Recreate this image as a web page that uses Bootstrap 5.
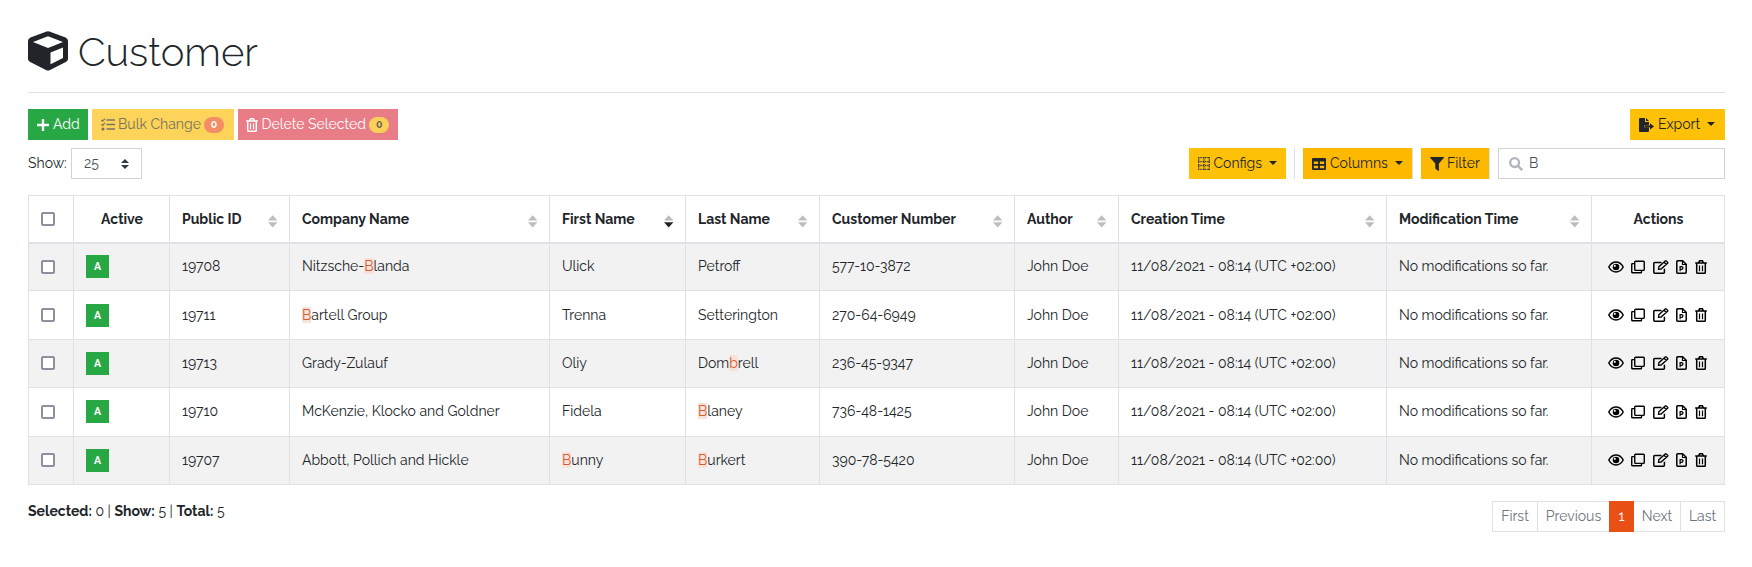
<!DOCTYPE html>
<html lang="en">
<head>
<meta charset="utf-8">
<meta name="viewport" content="width=device-width, initial-scale=1">
<title>Customer</title>
<link href="https://cdn.jsdelivr.net/npm/bootstrap@5.3.0/dist/css/bootstrap.min.css" rel="stylesheet">
<style>
  body { font: 14px/21px Raleway, Lato, sans-serif; color: #212529; background: #fff; overflow: hidden; }
  .page { padding: 27px 27px 0 28px; }
  svg { display: block; flex: none; }
  h1 { font-size: 40px; font-weight: 300; line-height: 48px; color: #212529; gap: 10px; height: 50px; }
  .rule { height: 1px; background: #dfe1e3; margin: 15px 0 16px; }
  .btn { --bs-btn-font-size: 14px; --bs-btn-border-radius: 0; --bs-btn-border-width: 0; height: 31px; padding: 0 9px; display: flex; align-items: center; gap: 4px; white-space: nowrap; line-height: 21px; }
  .btn-success { --bs-btn-bg: #28a745; }
  .btn-amber, .btn-amber:hover { background: #ffc107; color: #212529; }
  .deep, .deep:hover { background: #fdb900; }
  .btn-bulk, .btn-bulk:disabled { background: #fdd459; color: #77735f; opacity: 1; border: 0; }
  .btn-del, .btn-del:disabled { background: #e87c87; color: #fff; opacity: 1; border: 0; }
  .count { width: 20px; height: 16px; border-radius: 8px; font-size: 10.5px; font-weight: 700; line-height: 15px; text-align: center; }
  .caret { border: 4px solid transparent; border-top-color: #212529; border-bottom: 0; margin: 0 0 1px 3px; }
  .box { border: 1px solid #ced4da; height: 31px; background: #fff; display: flex; align-items: center; color: #495057; }
  .vline { width: 1px; height: 31px; background: #dee2e6; }
  .grid { table-layout: fixed; width: 1697px; border-collapse: collapse; margin: 16px 0 0; }
  .grid th, .grid td { border: 1px solid #dee2e6; padding: 0 12px; white-space: nowrap; vertical-align: middle; }
  .grid thead tr { height: 47px; }
  .grid thead th { border-bottom: 2px solid #dee2e6; font-weight: 700; padding: 1px 11px 0 12px; }
  .grid tbody tr { height: 48.4px; }
  .grid tbody tr:nth-child(odd) { background: #f2f2f2; }
  .tick { width: 14px; height: 14px; border: 2px solid #8f8f9d; border-radius: 2px; background: #fff; }
  .state { width: 23px; height: 23px; background: #28a745; color: #fff; font-size: 10.5px; font-weight: 700; line-height: 23px; text-align: center; }
  .hit { background: #f8e3dc; color: #d95b2c; }
  .tools { gap: 7.5px; color: #000; margin-left: 3.5px; }
  .page-link { --bs-pagination-font-size: 14px; --bs-pagination-color: #6c757d; --bs-pagination-border-radius: 0; height: 31px; padding: 4px 0; text-align: center; line-height: 21px; border-color: #dee2e6; }
  .active > .page-link { background: #e95015; border-color: #e95015; color: #fff; }
</style>
</head>
<body>
<svg width="0" height="0" class="position-absolute">
  <defs>
    <g id="trash" fill="none" stroke="currentColor" stroke-width="1.5"><path d="M.2 3h11.6M3.7 2.6 4.6.8h2.8l.9 1.8M1.7 3.2v9.2q0 .9.9.9h6.8q.9 0 .9-.9V3.2"/><path d="M4.5 5.4v5.8M7.5 5.4v5.8" stroke-width="1.2"/></g>
    <g id="sort"><path d="M0 5.5 4.7.2 9.4 5.5z"/><path d="M0 7.3h9.4L4.7 12.6z"/></g>
  </defs>
</svg>
<main class="page">
  <h1 class="d-flex align-items-center m-0">
    <svg width="40" height="40" viewBox="0 0 512 512" fill="#212529" style="margin-top:-2px"><path d="M239 6 31 84Q0 97 0 129v226q0 28 28 42l208 104q20 10 40 0l208-104q28-14 28-42V129q0-32-31-45L273 6q-17-6-34 0zm17 62 192 72v1l-192 78-192-78v-1zm32 357V275l160-65v134z"/></svg>
    <span>Customer</span>
  </h1>
  <div class="rule"></div>

  <div class="d-flex" style="gap:4px">
    <button class="btn btn-success" style="width:60px"><svg width="12" height="12" viewBox="0 0 12 12"><path d="M6 0v12M0 6h12" stroke="#fff" stroke-width="2.4"/></svg>Add</button>
    <button class="btn btn-bulk" style="width:142px;gap:3px" disabled>
      <svg width="14" height="13" viewBox="0 0 14 13" fill="none" stroke="#77735f" stroke-width="1.6"><path d="M5.5 2H14M5.5 6.5H14M5.5 11H14"/><path d="m.4 2 1.1 1.2L4 .6M.4 6.3l1.1 1.2L4 4.9" stroke-width="1.2"/><circle cx="2" cy="11" r=".7"/></svg>
      Bulk Change<span class="count text-white" style="background:#f48c68">0</span></button>
    <button class="btn btn-del" style="width:160px;gap:3.500px;padding-left:8px" disabled><svg width="12" height="14" viewBox="0 0 12 14"><use href="#trash"/></svg>Delete Selected<span class="count" style="background:#fbcf58;color:#66645c">0</span></button>
    <button class="btn btn-amber ms-auto" style="width:95px"><svg width="15" height="14" viewBox="0 0 15 14" fill="#212529"><path d="M1 0h5v4h4v3.600H5v1.600h5V13q0 1-1 1H1q-1 0-1-1V1q0-1 1-1zM7 0l3 3H7z"/><path d="M5.500 7.600H11V5.300l4 3.100-4 3.100V9.200H5.500z"/></svg>Export<i class="caret"></i></button>
  </div>

  <div class="d-flex align-items-center mt-2">
    <span style="width:43px">Show:</span>
    <div class="box justify-content-between" style="width:71px;padding:0 12px">25<svg width="8" height="10" viewBox="0 0 8 10" fill="#343a40"><path d="M0 4 4 0l4 4zM0 6h8l-4 4z"/></svg></div>
    <button class="btn btn-amber ms-auto"><svg width="12" height="13" viewBox="0 0 12 13" fill="none" stroke="#343a40" stroke-width="1.3" stroke-dasharray="1.4 .9"><path d="M0 .7h12M0 4.6h12M0 8.500h12M0 12.300h12M.7 0v13M6 0v13M11.300 0v13"/></svg>Configs<i class="caret"></i></button>
    <i class="vline ms-2"></i>
    <button class="btn btn-amber deep ms-2" style="width:109px"><svg width="14" height="12" viewBox="0 0 14 12" fill="#212529"><path fill-rule="evenodd" d="M1.3 0h11.4Q14 0 14 1.3v9.4q0 1.3-1.3 1.3H1.3Q0 12 0 10.7V1.3Q0 0 1.3 0zm.5 3.5v2.4h4.3V3.5zm6.1 0v2.4h4.3V3.5zM1.8 7.7v2.5h4.3V7.7zm6.1 0v2.5h4.3V7.7z"/></svg>Columns<i class="caret"></i></button>
    <i class="vline me-2"></i>
    <button class="btn btn-amber deep" style="width:68px;gap:3px"><svg width="14" height="14" viewBox="0 0 14 14" fill="#212529"><path d="M.7 0h12.6q1.2 0 .4 1L8.9 6.4v7q0 1-.9.3l-2.2-1.8q-.5-.4-.5-1V6.4L.3 1Q-.4 0 .7 0z"/></svg>Filter</button>
    <i class="vline me-2"></i>
    <div class="box" style="width:227px;padding-left:10px;gap:6px"><svg width="14" height="14" viewBox="0 0 14 14" fill="none" stroke="#adb5bd" stroke-width="2.3"><circle cx="5.6" cy="5.6" r="4.4"/><path d="m8.9 8.9 4.3 4.3"/></svg>B</div>
  </div>

  <table class="grid">
    <colgroup id="cols"></colgroup>
    <thead><tr id="head"></tr></thead>
    <tbody id="rows"></tbody>
  </table>

  <div class="d-flex justify-content-between mt-3">
    <div><b>Selected:</b> 0 | <b>Show:</b> 5 | <b>Total:</b> 5</div>
    <ul class="pagination m-0">
      <li class="page-item"><a class="page-link" style="width:46px" href="#">First</a></li>
      <li class="page-item"><a class="page-link" style="width:73px" href="#">Previous</a></li>
      <li class="page-item active"><a class="page-link" style="width:25px" href="#">1</a></li>
      <li class="page-item"><a class="page-link" style="width:48px" href="#">Next</a></li>
      <li class="page-item"><a class="page-link" style="width:45px" href="#">Last</a></li>
    </ul>
  </div>
</main>
<script src="https://cdn.jsdelivr.net/npm/bootstrap@5.3.0/dist/js/bootstrap.bundle.min.js"></script>
<script>
  const tick = '<div class="tick"></div>';
  const tools = `<div class="d-flex align-items-center tools">
    <svg width="16" height="12" viewBox="0 0 16 12"><path d="M.8 6Q3.500 1 8 1t7.200 5Q12.500 11 8 11T.8 6z" fill="none" stroke="#000" stroke-width="1.500"/><circle cx="8" cy="6" r="3.300"/><circle cx="6.800" cy="4.800" r="1.100" fill="#f2f2f2"/></svg>
    <svg width="14" height="14" viewBox="0 0 15 14" fill="none" stroke="#000" stroke-width="1.500"><rect x="4" y=".8" width="10.200" height="9.800" rx=".9"/><path d="M3.800 3.400H1.700q-.9 0-.9.900v8q0 .9.900.9h8.700q.9 0 .9-.900v-1.500"/></svg>
    <svg width="16" height="14" viewBox="0 0 16 14" fill="none" stroke="#000" stroke-width="1.500"><path d="M8.500 2.500H1.700q-.9 0-.9.900v8.900q0 .9.900.9h8.800q.9 0 .9-.900V8.800"/><path d="m5.500 9.200.4-2.500L12.200.9q.5-.4 1 0l1.400 1.300q.5.500 0 1L8 9z M11 2.200l2.400 2.300" stroke-width="1.300"/></svg>
    <svg width="11" height="14" viewBox="0 0 11 14" fill="none" stroke="#000" stroke-width="1.500"><path d="M1.600.8h5l3.600 3.500v8q0 .9-.9.900H1.700q-.9 0-.9-.900V1.700q0-.9.800-.9z"/><path d="M6.500.8v3.700h3.700M4.100 11.200V6.700h1.500q1.300 0 1.300 1.300T5.600 9.300H4.300" stroke-width="1.200"/></svg>
    <svg width="12" height="14" viewBox="0 0 12 14"><use href="#trash"/></svg></div>`;
  const columns = [['', 45], ['Active', 96], ['Public ID', 120], ['Company Name', 260], ['First Name', 136], ['Last Name', 134],
    ['Customer Number', 195], ['Author', 104], ['Creation Time', 268], ['Modification Time', 205], ['Actions', 133]];
  const people = [
    ['19708', 'Nitzsche-[B]landa', 'Ulick', 'Petroff', '577-10-3872'],
    ['19711', '[B]artell Group', 'Trenna', 'Setterington', '270-64-6949'],
    ['19713', 'Grady-Zulauf', 'Oliy', 'Dom[b]rell', '236-45-9347'],
    ['19710', 'McKenzie, Klocko and Goldner', 'Fidela', '[B]laney', '736-48-1425'],
    ['19707', 'Abbott, Pollich and Hickle', '[B]unny', '[B]urkert', '390-78-5420']];
  cols.innerHTML = columns.map(c => `<col style="width:${c[1]}px">`).join('');
  head.innerHTML = columns.map(([t], i) => {
    if (i === 0) return `<th>${tick}</th>`;
    if (t === 'Active' || t === 'Actions') return `<th class="text-center">${t}</th>`;
    const sort = t === 'First Name'
      ? '<path fill="#bbbdbf" d="M0 5.5 4.7.2 9.4 5.5z"/><path fill="#212529" d="M0 7.3h9.4L4.7 12.6z"/>'
      : '<use href="#sort" fill="#bbbdbf"/>';
    return `<th><div class="d-flex justify-content-between align-items-center">${t}<svg class="mt-1" width="10" height="13">${sort}</svg></div></th>`;
  }).join('');
  const mark = s => s.replace(/\[(.)\]/, '<span class="hit">$1</span>');
  rows.innerHTML = people.map(p => `<tr><td>${tick}</td><td><div class="state">A</div></td><td>${p[0]}</td>
    <td>${mark(p[1])}</td><td>${mark(p[2])}</td><td>${mark(p[3])}</td><td>${p[4]}</td><td>John Doe</td>
    <td>11/08/2021 - 08:14 (UTC +02:00)</td><td>No modifications so far.</td><td>${tools}</td></tr>`).join('');
</script>
</body>
</html>
